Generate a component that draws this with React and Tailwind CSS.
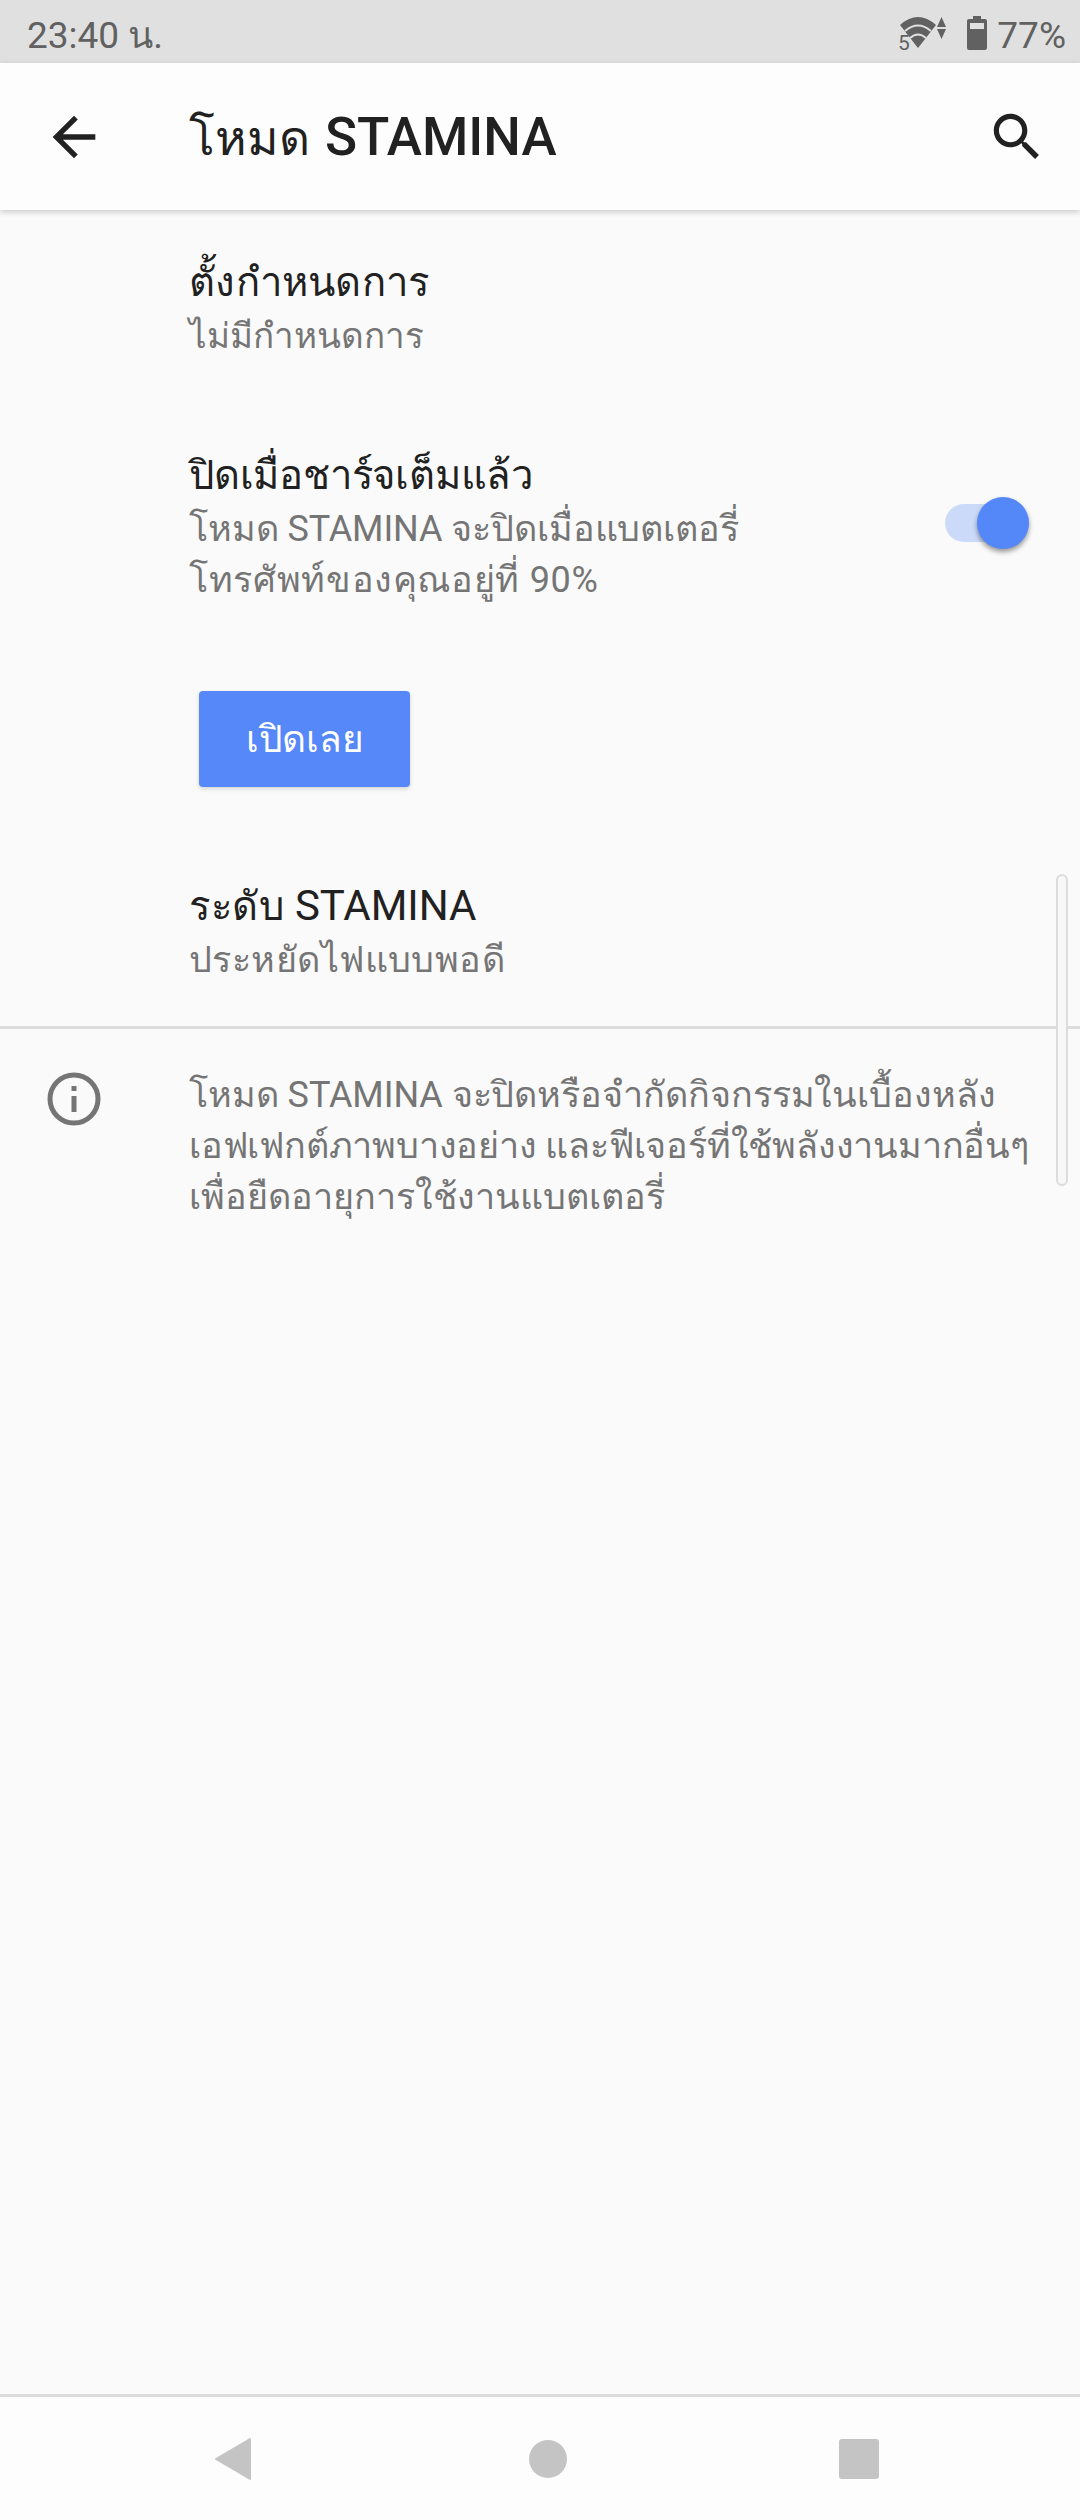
import React from "react";

function Row({ title, children, className = "" }) {
  return (
    <div className={`pl-[189px] ${className}`}>
      <div className="text-[40px] leading-[56px] text-[#212121]">{title}</div>
      <div className="text-[36px] leading-[51px] text-[#757575]">{children}</div>
    </div>
  );
}

function StatusIcons() {
  return (
    <div className="flex items-start">
      <svg width="52" height="44" viewBox="0 0 52 44" className="mt-[14px]">
        <text x="1" y="36" fontSize="21" fill="#616161" fontFamily="Roboto">5</text>
        <path d="M3 11 Q21 -5 39 11 L21 34 Z" fill="#616161" />
        <path d="M8 17 Q21 6 34 17 M13 24 Q21 17 29 24" stroke="#e0e0e0" strokeWidth="2" fill="none" />
        <path d="M44.5 3 L49 13 H40 Z M40 15 H49 L44.5 25 Z" fill="#616161" />
      </svg>
      <svg width="20" height="34" viewBox="0 0 20 34" className="ml-[18px] mt-[16px]">
        <path d="M6 0 H14 V3 H18 Q20 3 20 5 V32 Q20 34 18 34 H2 Q0 34 0 32 V5 Q0 3 2 3 H6 Z" fill="#616161" />
        <rect x="3" y="7" width="14" height="6" fill="#e0e0e0" />
      </svg>
      <span className="ml-[10px] mt-[14px] text-[37px] leading-[44px] text-[#616161]">77%</span>
    </div>
  );
}

export default function App() {
  return (
    <div className="flex flex-col w-[1080px] h-[2520px] bg-[#fafafa] font-['Roboto','Noto_Sans',sans-serif] overflow-hidden">
      <div className="flex items-start justify-between h-[63px] bg-[#e0e0e0] pl-[27px] pr-[14px]">
        <span className="mt-[14px] text-[37px] leading-[44px] text-[#616161]">23:40 น.</span>
        <StatusIcons />
      </div>

      <div className="relative z-10 flex items-center h-[147px] bg-[#fdfdfd] shadow-[0_2px_6px_rgba(0,0,0,0.2)]">
        <div className="flex justify-center w-[147px]">
          <svg width="64" height="64" viewBox="0 0 24 24" fill="#212121">
            <path d="M20 11H7.83l5.59-5.59L12 4l-8 8 8 8 1.41-1.41L7.83 13H20v-2z" />
          </svg>
        </div>
        <div className="ml-[42px] flex-1 pt-[2px] text-[48px] text-[#212121]">
          โหมด <span className="ml-[3px] text-[53px] font-medium">STAMINA</span>
        </div>
        <svg width="62" height="62" viewBox="0 0 24 24" fill="#212121" className="mr-[32px]">
          <path d="M15.5 14h-.79l-.28-.27C15.41 12.59 16 11.11 16 9.5 16 5.91 13.09 3 9.5 3S3 5.91 3 9.5 5.91 16 9.5 16c1.61 0 3.09-.59 4.23-1.57l.27.28v.79l5 4.99L20.49 19l-4.99-5zm-6 0C7.01 14 5 11.99 5 9.5S7.01 5 9.5 5 14 7.01 14 9.5 11.99 14 9.5 14z" />
        </svg>
      </div>

      <div className="relative flex-1 flex flex-col">
        <Row title={<span className="tracking-[0.3px]">ตั้งกำหนดการ</span>} className="mt-[45px]">
          <span className="text-[35px]">ไม่มีกำหนดการ</span>
        </Row>

        <div className="flex items-center mt-[86px]">
          <Row title={<span className="tracking-[-0.2px]">ปิดเมื่อชาร์จเต็มแล้ว</span>} className="flex-1">
            <span className="tracking-[-0.1px]">โหมด STAMINA จะปิดเมื่อแบตเตอรี่</span>
            <br />
            <span className="tracking-[0.65px]">โทรศัพท์ของคุณอยู่ที่ 90%</span>
          </Row>
          <div className="relative w-[84px] h-[38px] mr-[51px] mt-[-8px] bg-[#ccdafa] rounded-full">
            <div className="absolute right-0 top-[-7px] w-[52px] h-[52px] rounded-full bg-[#5488f8] shadow-[0_3px_5px_rgba(0,0,0,0.4)]" />
          </div>
        </div>

        <div className="ml-[199px] mt-[85px] flex items-center justify-center w-[211px] h-[96px] rounded-[4px] bg-[#5688f9] shadow-[0_2px_4px_rgba(0,0,0,0.15)] text-[37px] text-white">
          <span className="pt-[2px]">เปิดเลย</span>
        </div>

        <Row
          title={
            <>
              <span className="tracking-[0.6px]">ระดับ </span>
              <span className="text-[42px]">STAMINA</span>
            </>
          }
          className="mt-[91px]"
        >
          <span className="tracking-[0.45px]">ประหยัดไฟแบบพอดี</span>
        </Row>

        <div className="h-[3px] bg-[#dcdcdc] mt-[40px]" />

        <div className="flex mt-[41px]">
          <div className="flex justify-center w-[147px] pt-[2px]">
            <svg width="54" height="54" viewBox="0 0 54 54" fill="none" stroke="#757575">
              <circle cx="27" cy="27" r="24" strokeWidth="5" />
              <path d="M27 24 V40" strokeWidth="5" />
              <path d="M27 14 V19" strokeWidth="5" />
            </svg>
          </div>
          <div className="ml-[42px] text-[36px] leading-[51px] text-[#757575] whitespace-nowrap">
            <span className="tracking-[-0.07px]">โหมด STAMINA จะปิดหรือจำกัดกิจกรรมในเบื้องหลัง</span>
            <br />
            <span className="tracking-[-0.2px]">เอฟเฟกต์ภาพบางอย่าง และฟีเจอร์ที่ใช้พลังงานมากอื่นๆ</span>
            <br />
            เพื่อยืดอายุการใช้งานแบตเตอรี่
          </div>
        </div>

        <div className="absolute right-[12px] top-[664px] w-[12px] h-[312px] rounded-full bg-[#f7f7f7] border-2 border-[#dcdcdc]" />
      </div>

      <div className="flex items-center h-[126px] bg-[#fdfdfd] border-t-[3px] border-[#dcdcdc] pl-[215px]">
        <svg width="36" height="42" viewBox="0 0 36 42">
          <path d="M35 1 V41 L1 21 Z" fill="#c4c4c4" stroke="#c4c4c4" strokeWidth="2" strokeLinejoin="round" />
        </svg>
        <div className="ml-[278px] w-[38px] h-[38px] rounded-full bg-[#c4c4c4]" />
        <div className="ml-[272px] w-[40px] h-[40px] rounded-[3px] bg-[#c4c4c4]" />
      </div>
    </div>
  );
}
